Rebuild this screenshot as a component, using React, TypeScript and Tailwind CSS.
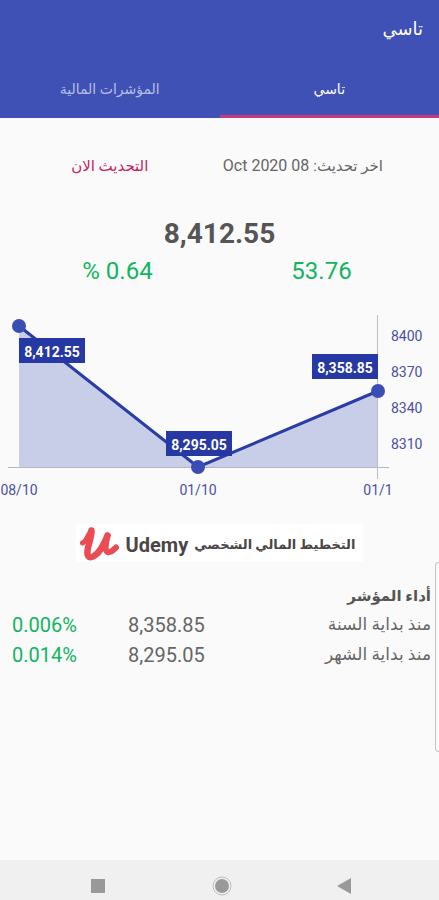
import { useState } from "react"
import clsx from "clsx"

interface ChartPoint {
  x: number
  y: number
  value: string
  date: string
  labelX: number
  labelY: number
}

const tabs = ["تاسي", "المؤشرات المالية"]

const points: ChartPoint[] = [
  { x: 19, y: 16, value: "8,412.55", date: "08/10", labelX: 19, labelY: 28 },
  { x: 198, y: 157, value: "8,295.05", date: "01/10", labelX: 166, labelY: 121 },
  { x: 378, y: 81, value: "8,358.85", date: "01/1", labelX: 312, labelY: 44 },
]

const ticks = [
  { label: "8400", y: 26 },
  { label: "8370", y: 62 },
  { label: "8340", y: 98 },
  { label: "8310", y: 134 },
]

const performance = [
  { label: "منذ بداية السنة", value: "8,358.85", change: "0.006%" },
  { label: "منذ بداية الشهر", value: "8,295.05", change: "0.014%" },
]

function IndexChart() {
  const line = points.map((p) => `${p.x},${p.y}`).join(" ")

  return (
    <svg viewBox="0 0 439 190" className="block h-auto w-full" direction="ltr" role="img" aria-label="تاسي">
      <polygon points={`19,157 ${line} 378,157`} fill="#c9cee8" />
      <path d="M8 157.5H389" stroke="#b4b6c6" />
      <path d="M377.5 5V169" stroke="#bdbdbd" />
      <polyline points={line} fill="none" stroke="#2a3ca6" strokeWidth="3" />
      {points.map((p) => (
        <g key={p.date}>
          <circle cx={p.x} cy={p.y} r="7" fill="#3a4db4" />
          <rect x={p.labelX} y={p.labelY} width="66" height="25" fill="#2638a4" />
          <text x={p.labelX + 33} y={p.labelY + 19} textAnchor="middle" fontSize="14" fontWeight="700" fill="#ffffff">
            {p.value}
          </text>
          <text x={p.x} y="185" textAnchor="middle" fontSize="14" fill="#4b50a0">
            {p.date}
          </text>
        </g>
      ))}
      {ticks.map((t) => (
        <text key={t.label} x="391" y={t.y + 5} fontSize="14" fill="#4b50a0">
          {t.label}
        </text>
      ))}
    </svg>
  )
}

function UdemyMark() {
  return (
    <svg viewBox="0 0 40 38" className="h-[38px] w-10" fill="none" stroke="#eb4b52" strokeLinecap="round" strokeLinejoin="round" aria-hidden="true">
      <path d="M2.500 19C6 18 8 11 11 7" strokeWidth="5" />
      <path d="M11.500 6.500C12 12 8 21 7.500 27C7 32 9 34 12 33C18 31 24 21 27.500 11.500" strokeWidth="6.500" />
      <path d="M27.500 11.500C26.500 17 24 26 27.500 28C31 29 33.500 26 36 23.500" strokeWidth="6" />
    </svg>
  )
}

export default function App() {
  const [active, setActive] = useState(0)

  return (
    <div
      dir="rtl"
      className="flex min-h-screen flex-col overflow-x-hidden bg-[#fafafa] font-['Roboto','DejaVu_Sans',sans-serif] text-[#666666]"
    >
      {/* App bar */}
      <header className="bg-[#3f51b5] text-white">
        <h1 className="flex h-[62px] items-center px-4 pb-1 text-lg">تاسي</h1>
        <nav className="flex" role="tablist">
          {tabs.map((tab, i) => (
            <button
              key={tab}
              role="tab"
              aria-selected={active === i}
              onClick={() => setActive(i)}
              className={clsx(
                "h-14 flex-1 border-b-3 text-sm",
                active === i ? "border-[#c83a80] text-white" : "border-[#3f51b5] text-[#b7bfe6]"
              )}
            >
              {tab}
            </button>
          ))}
        </nav>
      </header>

      <main className="flex-1">
        {/* Last update */}
        <div className="grid grid-cols-2 pt-9 text-center leading-6">
          <p className="pr-14 text-right whitespace-nowrap">
            <span className="text-[15px]">اخر تحديث:</span> 08 Oct 2020
          </p>
          <button className="text-[15px] text-[#c2255f]">التحديث الان</button>
        </div>

        {/* Current value */}
        <p className="pt-[38px] text-center text-[28px] leading-9 font-bold text-[#555555]">8,412.55</p>
        <div className="flex justify-center pt-[3px] text-center text-2xl leading-8 text-[#0fb561]">
          <p className="w-[204px]">53.76</p>
          <p className="w-[204px]" dir="ltr">% 0.64</p>
        </div>

        <div className="pt-[23px]">
          <IndexChart />
        </div>

        {/* Sponsor */}
        <a href="#udemy" dir="ltr" className="mx-auto mt-6 flex w-fit items-center gap-[6px] bg-white pr-2 pl-1 text-[#4b4646]">
          <UdemyMark />
          <span className="pt-1 text-xl font-bold">Udemy</span>
          <span className="pt-1 text-[13px] font-bold whitespace-nowrap" dir="rtl">التخطيط المالي الشخصي</span>
        </a>

        {/* Performance */}
        <div className="flex">
          <div className="h-[190px] w-1 rounded-l-lg border border-r-0 border-[#c4c4c4]" />
          <section className="flex-1 px-1 pt-5">
            <h2 className="text-[15px] leading-7 font-bold text-[#555555]">أداء المؤشر</h2>
            <table className="w-full table-fixed">
              <tbody>
                {performance.map((row) => (
                  <tr key={row.label} className="h-[30px]">
                    <th scope="row" className="text-right text-[17px] font-normal">{row.label}</th>
                    <td className="w-[104px] text-left text-xl">{row.value}</td>
                    <td className="w-[124px] pl-2 text-left text-xl text-[#0fb561]">
                      {row.change}
                    </td>
                  </tr>
                ))}
              </tbody>
            </table>
          </section>
        </div>
      </main>

      {/* System navigation */}
      <nav dir="ltr" className="flex h-10 items-center justify-between bg-[#f0f0f0] pt-3 pr-[84px] pl-[88px]">
        <button aria-label="Recent apps">
          <svg width="20" height="20" viewBox="0 0 20 20">
            <rect x="3" y="3" width="14" height="14" fill="#999999" />
          </svg>
        </button>
        <button aria-label="Home">
          <svg width="20" height="20" viewBox="0 0 20 20">
            <circle cx="10" cy="10" r="9" fill="none" stroke="#bdbdbd" />
            <circle cx="10" cy="10" r="7" fill="#999999" />
          </svg>
        </button>
        <button aria-label="Back">
          <svg width="20" height="20" viewBox="0 0 20 20">
            <path d="M16 2V18L2 10Z" fill="#999999" />
          </svg>
        </button>
      </nav>
    </div>
  )
}
